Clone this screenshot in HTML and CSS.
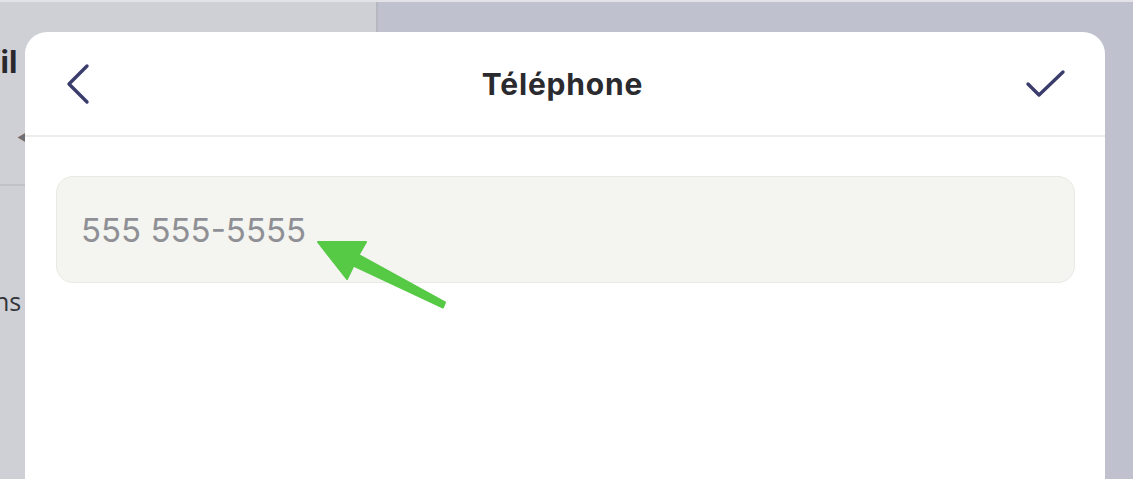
FILE: index.html
```html
<!DOCTYPE html>
<html lang="fr">
<head>
<meta charset="utf-8">
<title>Téléphone</title>
<link rel="stylesheet" href="styles.css">
</head>
<body>
<div class="app">
  <div class="topstrip"></div>
  <div class="panes">
    <section class="pane-left">
      <div class="left-head">
        <h1 class="left-title">Profil</h1>
        <div class="left-back">&#9664;</div>
      </div>
      <p class="left-text">Options</p>
    </section>
    <section class="pane-right"></section>
  </div>

  <div class="modal">
    <header class="modal-head">
      <button class="icon-btn" aria-label="Retour">
        <svg width="30" height="44" viewBox="0 0 30 44"><path d="M22 4 L4 22 L22 40" fill="none" stroke="#3a3d6b" stroke-width="3.4" stroke-linecap="round" stroke-linejoin="round"/></svg>
      </button>
      <h2 class="modal-title">Téléphone</h2>
      <button class="icon-btn" aria-label="Valider">
        <svg width="44" height="34" viewBox="0 0 44 34"><path d="M5 17 L16 28 L40 5" fill="none" stroke="#3a3d6b" stroke-width="3.4" stroke-linecap="round" stroke-linejoin="round"/></svg>
      </button>
    </header>
    <div class="modal-body">
      <div class="field">
        <input class="phone-input" type="tel" placeholder="555 555-5555">
      </div>
    </div>
  </div>

  <svg class="arrow" width="1133" height="479" viewBox="0 0 1133 479">
    <polygon points="318,242 366,242 358.5,255 445,302.5 443,307.5 353.5,265.5 347,279" fill="#56c945" stroke="#56c945" stroke-width="2" stroke-linejoin="round"/>
  </svg>
</div>
</body>
</html>
```

FILE: styles.css
```css
* { box-sizing: border-box; }
html, body { margin: 0; padding: 0; }
body {
  width: 1133px;
  height: 479px;
  overflow: hidden;
  font-family: Inter, "Liberation Sans", sans-serif;
  background: #cfd0d6;
}
.app {
  position: relative;
  width: 1133px;
  height: 479px;
  display: flex;
  flex-direction: column;
}
.topstrip {
  height: 2px;
  background: #e3e3e7;
}
.panes {
  flex: 1;
  display: flex;
}
.pane-left {
  width: 378px;
  background: #cfd0d6;
  border-right: 2px solid #b6b7bf;
  overflow: hidden;
}
.pane-right {
  flex: 1;
  background: #bfc1cf;
}
.left-head {
  height: 184px;
  border-bottom: 2px solid #c1c2c8;
  padding-top: 42px;
}
.left-title {
  margin: 0 0 0 -63px;
  font-size: 31px;
  font-weight: 700;
  color: #28282d;
  line-height: 36px;
}
.left-back {
  margin: 51px 0 0 17px;
  font-size: 12px;
  color: #6e6f76;
  line-height: 14px;
}
.left-text {
  margin: 100px 0 0 -71px;
  font-family: "Open Sans", sans-serif;
  font-size: 25px;
  color: #34353a;
  line-height: 30px;
}
.modal {
  position: absolute;
  left: 25px;
  top: 32px;
  bottom: 0;
  width: 1080px;
  background: #ffffff;
  border-radius: 22px 22px 0 0;
  display: flex;
  flex-direction: column;
}
.modal-head {
  height: 105px;
  border-bottom: 2px solid #ededea;
  display: flex;
  align-items: center;
  justify-content: space-between;
  padding: 0 38px 0 33px;
}
.icon-btn {
  border: 0;
  background: none;
  padding: 0;
  display: flex;
  align-items: center;
  justify-content: center;
  width: 44px;
  height: 44px;
}
.modal-title {
  margin: 0;
  font-size: 30px;
  font-weight: 700;
  color: #2a2a2f;
  letter-spacing: 0.8px;
}
.modal-body {
  padding: 39px 30px 0 31px;
}
.field {
  height: 107px;
  background: #f4f5f0;
  border: 1.5px solid #e9eae3;
  border-radius: 17px;
  display: flex;
  align-items: center;
  padding: 0 0 0 24px;
}
.phone-input {
  width: 100%;
  border: 0;
  background: transparent;
  outline: none;
  font-family: Inter, "Liberation Sans", sans-serif;
  font-size: 33px;
  color: #2a2a2f;
  padding: 0;
  margin-top: 1px;
}
.phone-input::placeholder {
  color: #8f9095;
}
.arrow {
  position: absolute;
  left: 0;
  top: 0;
  pointer-events: none;
}
```
